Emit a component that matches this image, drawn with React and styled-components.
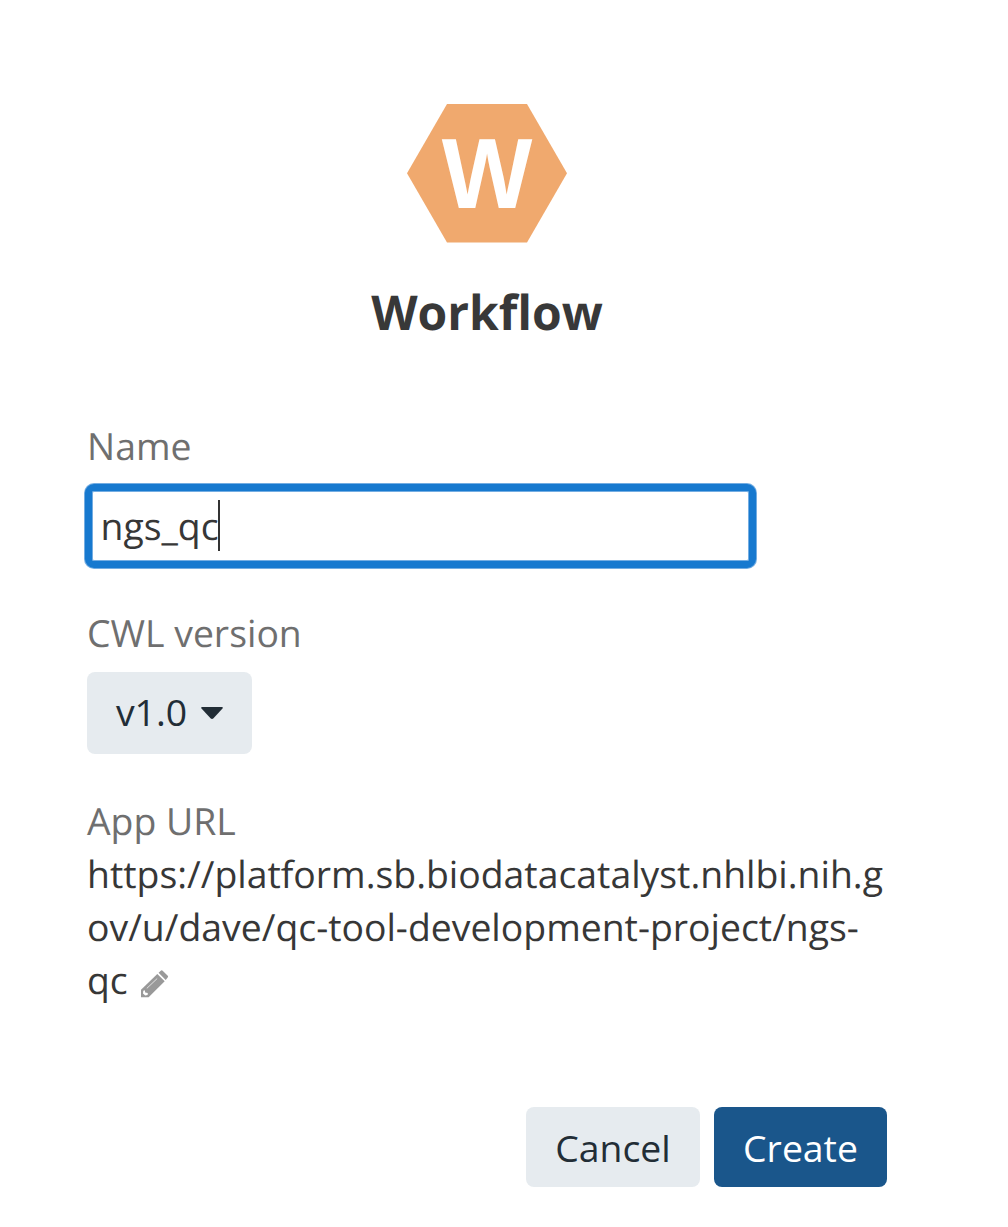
import React from 'react';
import styled, { createGlobalStyle } from 'styled-components';

const GlobalStyle = createGlobalStyle`
  * { box-sizing: border-box; }
  body { margin: 0; background: #fff; }
`;
const Dialog = styled.main`
  width: 1008px;
  height: 1227px;
  padding: 104px 121px 0 87px;
  display: flex;
  flex-direction: column;
  background: #fff;
  color: #373737;
  font-family: 'Open Sans', sans-serif;
  font-size: 37.36px;
  line-height: 53px;
  text-rendering: geometricPrecision;
`;
const Header = styled.header`
  display: flex;
  flex-direction: column;
  align-items: center;
  height: 315px;
`;
const Hexagon = styled.div`
  width: 160px;
  height: 138.6px;
  display: flex;
  align-items: center;
  justify-content: center;
  background: #f0a96e;
  clip-path: polygon(25% 0, 75% 0, 100% 50%, 75% 100%, 25% 100%, 0 50%);
`;
const Letter = styled.span`
  color: #fff;
  font-family: 'Liberation Sans', sans-serif;
  font-size: 96px;
  font-weight: 700;
  line-height: 138px;
  transform: translateY(1.8px) scaleY(1.04);
`;
const Title = styled.h1`
  margin: 37.4px 0 0;
  font-size: 48px;
  line-height: 66px;
  font-weight: 700;
  color: #383838;
`;
const Field = styled.section`
  display: flex;
  flex-direction: column;
  align-items: flex-start;
  height: ${({ $height }) => $height}px;
`;
const Label = styled.label`
  color: #6f6f6f;
  white-space: nowrap;
`;
const NameBox = styled.div`
  width: 671px;
  height: 84px;
  margin: 12px 0 0 -2px;
  padding: 0 0 1px 8.5px;
  display: flex;
  align-items: center;
  border: 7px solid #1779cf;
  border-radius: 9px;
  box-shadow: 0 0 0 1px #74ade2, inset 0 0 0 1px #74ade2;
  background: #fff;
`;
const Caret = styled.span`
  width: 2px;
  height: 51px;
  margin: 0 0 0 -0.5px;
  background: #333;
`;
const Button = styled.button`
  width: ${({ $width }) => $width}px;
  height: ${({ $height }) => $height || 80}px;
  margin: 0;
  padding: 0;
  display: flex;
  align-items: center;
  justify-content: center;
  gap: 14px;
  border: 0;
  border-radius: 8px;
  background: ${({ $primary }) => ($primary ? '#1a568b' : '#e6ebef')};
  color: ${({ $primary }) => ($primary ? '#fff' : '#222d36')};
  font: inherit;
`;
const Version = styled(Button)`
  margin-top: 13px;
  padding-bottom: 3px;
`;
const Arrow = styled.svg`
  width: 22px;
  height: 12px;
  margin-top: 3px;
`;
const Url = styled.div`
  width: 800px;
`;
const Line = styled.div`
  display: flex;
  align-items: center;
  gap: 13px;
  height: 53px;
  white-space: nowrap;
`;
const Pencil = styled.svg`
  width: 28px;
  height: 28px;
  margin-top: 8px;
`;
const Actions = styled.footer`
  display: flex;
  justify-content: flex-end;
  gap: 14px;
`;

export default function App() {
  return (
    <>
      <GlobalStyle />
      <Dialog>
        <Header>
          <Hexagon><Letter>W</Letter></Hexagon>
          <Title>Workflow</Title>
        </Header>
        <Field $height={187}>
          <Label>Name</Label>
          <NameBox><span>ngs_qc</span><Caret /></NameBox>
        </Field>
        <Field $height={188}>
          <Label>CWL version</Label>
          <Version $width={165} $height={82}>
            v1.0
            <Arrow viewBox="0 0 22 12"><path d="M1.3 0h19.4q1.8 0 .8 1.5l-9 9.8q-1.5 1.3-3 0l-9-9.8Q-.5 0 1.3 0Z" fill="currentColor" /></Arrow>
          </Version>
        </Field>
        <Field $height={313}>
          <Label>App URL</Label>
          <Url>
            <Line>https://platform.sb.biodatacatalyst.nhlbi.nih.g</Line>
            <Line>ov/u/dave/qc-tool-development-project/ngs-</Line>
            <Line>
              qc
              <Pencil viewBox="0 0 28 28" fill="#999">
                <path d="M0 19.8 16.3 3.9 23.7 11.2 7.6 27.2H0Z" />
                <path d="m17.6 2.8 1.9-1.9q1.2-1.1 2.4 0l4.6 4.5q1.2 1.2 0 2.4L24.7 10Z" />
                <path d="m5.8 18.4 10.4-9.9" stroke="#fff" strokeWidth=".7" />
                <path d="m2.3 20.7 1.5-.4.4 2.3 2.6.5-.2 1.8-2.4.7-2.2-2.1Z" fill="#fff" />
              </Pencil>
            </Line>
          </Url>
        </Field>
        <Actions>
          <Button $width={174}>Cancel</Button>
          <Button $width={173} $primary>Create</Button>
        </Actions>
      </Dialog>
    </>
  );
}
